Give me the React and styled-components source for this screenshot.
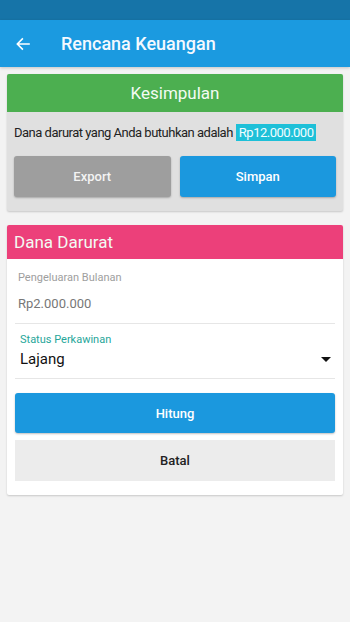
import React from "react";
import styled, { createGlobalStyle } from "styled-components";

const Global = createGlobalStyle`
  html, body { margin: 0; padding: 0; background: #f3f3f3; }
  body { font-family: Roboto, "Noto Sans", sans-serif; }
  * { box-sizing: border-box; }
`;

const Screen = styled.div`
  width: 350px;
  min-height: 622px;
  background: #f3f3f3;
`;

const StatusBar = styled.div`
  height: 20px;
  background: #1674a8;
`;

const AppBar = styled.div`
  height: 47px;
  background: #1b9ae0;
  display: flex;
  align-items: center;
  padding-left: 15px;
  gap: 30px;
  box-shadow: 0 1px 3px rgba(0,0,0,0.2);
  color: #fff;
`;

const Title = styled.div`
  font-size: 18px;
  font-weight: 500;
  color: #f4f9ff;
`;

const Content = styled.div`
  padding: 7px 7px;
  display: flex;
  flex-direction: column;
  gap: 14px;
`;

const Card = styled.div`
  background: ${p => p.$bg};
  box-shadow: 0 1px 2px rgba(0,0,0,0.18);
  border-radius: 2px;
  overflow: hidden;
`;

const CardHeader = styled.div`
  height: ${p => p.$h}px;
  background: ${p => p.$bg};
  color: #f3fbf3;
  display: flex;
  align-items: center;
  justify-content: ${p => (p.$center ? "center" : "flex-start")};
  padding: 0 7px;
  font-size: ${p => p.$fs}px;
`;

const SummaryBody = styled.div`
  padding: 12px 7px 14px;
`;

const SummaryText = styled.div`
  font-size: 13px;
  letter-spacing: -0.5px;
  color: #222;
  white-space: nowrap;
  line-height: 18px;
`;

const Highlight = styled.span`
  background: #1ec0d8;
  color: #f2fdff;
  padding: 1px 3px;
  margin-left: 3px;
`;

const ButtonRow = styled.div`
  display: grid;
  grid-template-columns: 1fr 1fr;
  gap: 9px;
  margin-top: 14px;
`;

const Btn = styled.button`
  height: ${p => p.$h || 41}px;
  border: none;
  border-radius: ${p => (p.$flat ? 0 : 3)}px;
  background: ${p => p.$bg};
  color: ${p => p.$color || "#fff"};
  font-family: Roboto, sans-serif;
  font-weight: 500;
  font-size: 13px;
  box-shadow: ${p => (p.$flat ? "none" : "0 1px 2px rgba(0,0,0,0.25)")};
  width: 100%;
`;

const FormBody = styled.div`
  padding: 0 8px 14px;
  display: flex;
  flex-direction: column;
`;

const Field = styled.div`
  border-bottom: 1px solid #e6e6e6;
  padding: ${p => p.$pad};
  display: flex;
  flex-direction: column;
`;

const FieldLabel = styled.div`
  font-size: 11px;
  color: ${p => p.$color};
  padding-left: ${p => p.$indent}px;
`;

const FieldValue = styled.div`
  font-size: ${p => p.$fs}px;
  color: ${p => p.$color};
  padding-left: ${p => p.$indent}px;
  margin-top: ${p => p.$mt}px;
  display: flex;
  align-items: center;
  justify-content: space-between;
`;

const Caret = styled.span`
  width: 0;
  height: 0;
  border-left: 5px solid transparent;
  border-right: 5px solid transparent;
  border-top: 5px solid #111;
  margin-right: 4px;
`;

const Actions = styled.div`
  display: flex;
  flex-direction: column;
  gap: 7px;
  margin-top: 14px;
`;

export default function App() {
  return (
    <Screen>
      <Global />
      <StatusBar />
      <AppBar>
        <svg width="16" height="16" viewBox="0 0 24 24" fill="none" stroke="#fff" strokeWidth="2.4" strokeLinecap="square">
          <path d="M21 12H4M11 4.5L3.5 12l7.5 7.5" />
        </svg>
        <Title>Rencana Keuangan</Title>
      </AppBar>
      <Content>
        <Card $bg="#e0e0e0">
          <CardHeader $bg="#4caf50" $h={38} $fs={17} $center>Kesimpulan</CardHeader>
          <SummaryBody>
            <SummaryText>
              Dana darurat yang Anda butuhkan adalah<Highlight>Rp12.000.000</Highlight>
            </SummaryText>
            <ButtonRow>
              <Btn $bg="#9e9e9e" $color="#f3f3f3">Export</Btn>
              <Btn $bg="#1b98de">Simpan</Btn>
            </ButtonRow>
          </SummaryBody>
        </Card>
        <Card $bg="#fff">
          <CardHeader $bg="#ec407a" $h={34} $fs={17}>Dana Darurat</CardHeader>
          <FormBody>
            <Field $pad="12px 0 12px">
              <FieldLabel $color="#9e9e9e" $indent={3}>Pengeluaran Bulanan</FieldLabel>
              <FieldValue $fs={13} $color="#777" $indent={3} $mt={12}>Rp2.000.000</FieldValue>
            </Field>
            <Field $pad="9px 0 10px">
              <FieldLabel $color="#26a69a" $indent={5}>Status Perkawinan</FieldLabel>
              <FieldValue $fs={15} $color="#111" $indent={5} $mt={4}>
                Lajang <Caret />
              </FieldValue>
            </Field>
            <Actions>
              <Btn $bg="#1b98de" $h={40}>Hitung</Btn>
              <Btn $bg="#ececec" $color="#222" $h={41} $flat>Batal</Btn>
            </Actions>
          </FormBody>
        </Card>
      </Content>
    </Screen>
  );
}
